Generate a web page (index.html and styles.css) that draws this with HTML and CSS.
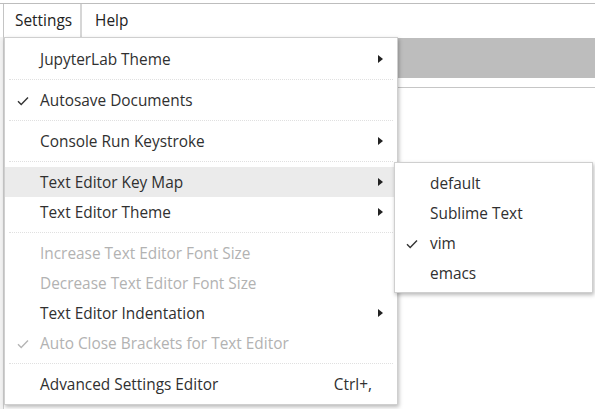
FILE: index.html
```html
<!DOCTYPE html>
<html>
<head>
<meta charset="utf-8">
<link rel="stylesheet" href="styles.css">
</head>
<body>
<div class="app">
  <div class="menubar">
    <div class="mb-item active">Settings</div>
    <div class="mb-item">Help</div>
  </div>
  <div class="workspace">
    <div class="left-strip"></div>
    <div class="main">
      <div class="toolbar-band"></div>
      <div class="tab-line"></div>
    </div>
  </div>

  <div class="menu main-menu">
    <div class="item"><span class="check"></span><span class="label">JupyterLab Theme</span><span class="arrow"></span></div>
    <div class="sep"></div>
    <div class="item"><span class="check"><svg width="12" height="10" viewBox="0 0 12 10"><path d="M1 5.2 L4.2 8.4 L11 1.4" fill="none" stroke="#333" stroke-width="1.4"/></svg></span><span class="label">Autosave Documents</span></div>
    <div class="sep"></div>
    <div class="item"><span class="check"></span><span class="label">Console Run Keystroke</span><span class="arrow"></span></div>
    <div class="sep"></div>
    <div class="item hover"><span class="check"></span><span class="label">Text Editor Key Map</span><span class="arrow"></span></div>
    <div class="item"><span class="check"></span><span class="label">Text Editor Theme</span><span class="arrow"></span></div>
    <div class="sep"></div>
    <div class="item disabled"><span class="check"></span><span class="label">Increase Text Editor Font Size</span></div>
    <div class="item disabled"><span class="check"></span><span class="label">Decrease Text Editor Font Size</span></div>
    <div class="item"><span class="check"></span><span class="label">Text Editor Indentation</span><span class="arrow"></span></div>
    <div class="item disabled"><span class="check"><svg width="12" height="10" viewBox="0 0 12 10"><path d="M1 5.2 L4.2 8.4 L11 1.4" fill="none" stroke="#b5b5b5" stroke-width="1.4"/></svg></span><span class="label">Auto Close Brackets for Text Editor</span></div>
    <div class="sep"></div>
    <div class="item"><span class="check"></span><span class="label">Advanced Settings Editor</span><span class="shortcut">Ctrl+,</span></div>
  </div>

  <div class="menu sub-menu">
    <div class="item"><span class="check"></span><span class="label">default</span></div>
    <div class="item"><span class="check"></span><span class="label">Sublime Text</span></div>
    <div class="item"><span class="check"><svg width="12" height="10" viewBox="0 0 12 10"><path d="M1 5.2 L4.2 8.4 L11 1.4" fill="none" stroke="#333" stroke-width="1.4"/></svg></span><span class="label">vim</span></div>
    <div class="item"><span class="check"></span><span class="label">emacs</span></div>
  </div>
</div>
</body>
</html>
```
FILE: styles.css
```css
* { box-sizing: border-box; }
html, body { margin: 0; padding: 0; background: #fff; }
body {
  width: 595px; height: 409px; overflow: hidden;
  font-family: "Open Sans", "Liberation Sans", sans-serif;
  font-size: 15px; color: #333;
}
.app { position: relative; width: 595px; height: 409px; padding-top: 3px; }
.menubar {
  display: flex; height: 34px;
  border-top: 1px solid #bdbdbd;
  background: #fff;
}
.mb-item {
  display: flex; align-items: center;
  padding: 0 11px 0 13px; height: 33px;
  color: #222; font-size: 15.4px;
}
.mb-item.active {
  margin-left: 3px;
  border-left: 1px solid #c4c4c4;
  border-right: 2px solid #d6d6d6;
  padding: 0 8px 0 11px;
}
.workspace { display: flex; height: 372px; }
.left-strip { width: 4px; background: #f2f2f2; border-right: 1px solid #cfcfcf; }
.main { flex: 1; padding-top: 1px; }
.toolbar-band { height: 40px; background: #bdbdbd; margin-left: 393px; }
.tab-line { height: 1px; background: #c6c6c6; margin: 9px 0 0 393px; }

.menu {
  position: absolute; background: #fff;
  border: 1px solid #cfcfcf;
  box-shadow: 1px 2px 4px rgba(0,0,0,0.28);
}
.main-menu { left: 4px; top: 37px; width: 394px; padding: 6px 0 5px; }
.sub-menu { left: 394px; top: 162px; width: 199px; padding: 5px 0 4px; }
.item {
  display: flex; align-items: center; height: 30px;
  padding: 0 14px 0 12px;
  color: #303030; font-size: 15.4px;
}
.item.hover { background: #ebebeb; }
.item.disabled { color: #b2b2b2; }
.check { width: 23px; flex: none; display: flex; align-items: center; padding-top: 1px; }
.sub-menu .check { margin-left: -1px; width: 24px; }
.label { flex: 1; white-space: nowrap; }
.arrow {
  width: 0; height: 0; flex: none;
  border-top: 4px solid transparent; border-bottom: 4px solid transparent;
  border-left: 5px solid #222;
}
.shortcut { flex: none; padding-right: 11px; }
.sep { height: 11px; display: flex; align-items: center; padding: 0 4px; }
.sep::after { content: ""; flex: 1; border-top: 1px dotted #e0e0e0; }
```
